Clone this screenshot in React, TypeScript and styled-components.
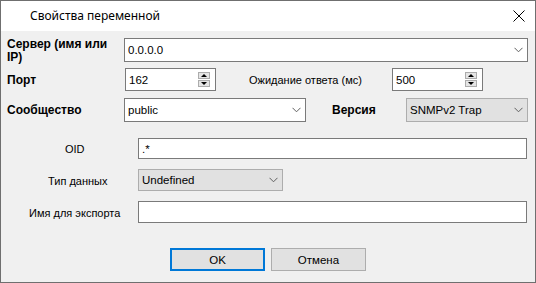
import React from "react";
import styled, { createGlobalStyle } from "styled-components";

const Global = createGlobalStyle`
  html, body { margin: 0; padding: 0; background: #ffffff; }
  body { width: 536px; height: 283px; overflow: hidden; }
  * { box-sizing: border-box; }
`;

const Window = styled.div`
  width: 536px;
  height: 283px;
  border: 1px solid #6f6f6f;
  display: flex;
  flex-direction: column;
  background: #f0f0f0;
  font-family: "Liberation Sans", Arial, sans-serif;
  font-size: 11px;
  color: #000;
`;

const TitleBar = styled.div`
  height: 30px;
  flex: none;
  background: #ffffff;
  display: flex;
  align-items: center;
  padding-left: 29px;
  padding-right: 9px;
  font-family: "Noto Sans", "Open Sans", sans-serif;
  font-size: 12px;
  color: #000;
`;

const Title = styled.span`
  flex: 1;
  position: relative;
  top: -1px;
`;

const CloseButton = styled.div`
  width: 14px;
  height: 14px;
  display: flex;
  align-items: center;
  justify-content: center;
`;

const Body = styled.div`
  flex: 1;
  display: flex;
  flex-direction: column;
  padding: 0 7px 0 6px;
`;

const Row = styled.div<{ $top: number; $h: number }>`
  display: flex;
  align-items: center;
  margin-top: ${(p) => p.$top}px;
  height: ${(p) => p.$h}px;
`;

const BoldLabel = styled.div<{ $w: number; $pad?: number }>`
  width: ${(p) => p.$w}px;
  flex: none;
  padding-left: ${(p) => p.$pad ?? 0}px;
  font-weight: bold;
  font-size: 12px;
  line-height: 13px;
  padding-top: 1px;
`;

const Label = styled.div<{ $w?: number; $pad?: number }>`
  width: ${(p) => (p.$w ? `${p.$w}px` : "auto")};
  flex: none;
  padding-left: ${(p) => p.$pad ?? 0}px;
  white-space: nowrap;
  padding-top: 1px;
`;

const Field = styled.div<{ $w?: number; $gray?: boolean; $mr?: number }>`
  ${(p) => (p.$w ? `width: ${p.$w}px; flex: none;` : "flex: 1;")}
  margin-right: ${(p) => p.$mr ?? 0}px;
  height: 100%;
  border: 1px solid ${(p) => (p.$gray ? "#adadad" : "#7a7a7a")};
  background: ${(p) => (p.$gray ? "#e1e1e1" : "#ffffff")};
  display: flex;
  align-items: center;
  padding-left: 3px;
  padding-right: 4px;
  font-size: 11.5px;
  white-space: nowrap;
`;

const FieldText = styled.span`
  flex: 1;
`;

const SpinStack = styled.div`
  display: flex;
  flex-direction: column;
  gap: 1px;
  margin-right: 1px;
`;

const SpinBtn = styled.div`
  width: 12px;
  height: 7px;
  background: #e5e5e5;
  border: 1px solid #acacac;
  display: flex;
  align-items: center;
  justify-content: center;
`;

const Arrow = styled.div<{ $down?: boolean }>`
  width: 0;
  height: 0;
  border-left: 3px solid transparent;
  border-right: 3px solid transparent;
  ${(p) =>
    p.$down
      ? "border-top: 3px solid #000;"
      : "border-bottom: 3px solid #000;"}
`;

const ButtonRow = styled.div`
  display: flex;
  gap: 6px;
  margin-top: 25px;
  padding-left: 163px;
`;

const Button = styled.div<{ $primary?: boolean }>`
  width: 95px;
  height: 23px;
  display: flex;
  align-items: center;
  justify-content: center;
  background: #e1e1e1;
  border: ${(p) => (p.$primary ? "2px solid #0078d7" : "1px solid #adadad")};
  font-size: 11.5px;
`;

const Chevron = () => (
  <svg width="9" height="6" viewBox="0 0 9 6" style={{ flex: "none" }}>
    <path d="M0.5 0.8 L4.5 4.8 L8.5 0.8" fill="none" stroke="#5f5f5f" strokeWidth="1" />
  </svg>
);

const Spinner = () => (
  <SpinStack>
    <SpinBtn>
      <Arrow />
    </SpinBtn>
    <SpinBtn>
      <Arrow $down />
    </SpinBtn>
  </SpinStack>
);

export default function App() {
  return (
    <>
      <Global />
      <Window>
        <TitleBar>
          <Title>Свойства переменной</Title>
          <CloseButton>
            <svg width="12" height="12" viewBox="0 0 12 12">
              <path d="M0.5 0.5 L11.5 11.5 M11.5 0.5 L0.5 11.5" stroke="#000" strokeWidth="1" />
            </svg>
          </CloseButton>
        </TitleBar>
        <Body>
          <Row $top={7} $h={24}>
            <BoldLabel $w={117}>
              Сервер (имя или
              <br />
              IP)
            </BoldLabel>
            <Field>
              <FieldText>0.0.0.0</FieldText>
              <Chevron />
            </Field>
          </Row>
          <Row $top={6} $h={23}>
            <BoldLabel $w={118}>Порт</BoldLabel>
            <Field $w={91}>
              <FieldText>162</FieldText>
              <Spinner />
            </Field>
            <Label $pad={33} $w={176}>Ожидание ответа (мс)</Label>
            <Field $w={91}>
              <FieldText>500</FieldText>
              <Spinner />
            </Field>
          </Row>
          <Row $top={7} $h={24}>
            <BoldLabel $w={117}>Сообщество</BoldLabel>
            <Field $w={182}>
              <FieldText>public</FieldText>
              <Chevron />
            </Field>
            <BoldLabel $w={100} $pad={26}>Версия</BoldLabel>
            <Field $w={122} $gray>
              <FieldText>SNMPv2 Trap</FieldText>
              <Chevron />
            </Field>
          </Row>
          <Row $top={16} $h={21}>
            <Label $w={131} $pad={58}>OID</Label>
            <Field $mr={1}>
              <FieldText>.*</FieldText>
            </Field>
          </Row>
          <Row $top={10} $h={22}>
            <Label $w={131} $pad={41}>Тип данных</Label>
            <Field $w={145} $gray>
              <FieldText>Undefined</FieldText>
              <Chevron />
            </Field>
          </Row>
          <Row $top={10} $h={22}>
            <Label $w={131} $pad={22}>Имя для экспорта</Label>
            <Field $mr={1}>
              <FieldText></FieldText>
            </Field>
          </Row>
          <ButtonRow>
            <Button $primary>OK</Button>
            <Button>Отмена</Button>
          </ButtonRow>
        </Body>
      </Window>
    </>
  );
}
